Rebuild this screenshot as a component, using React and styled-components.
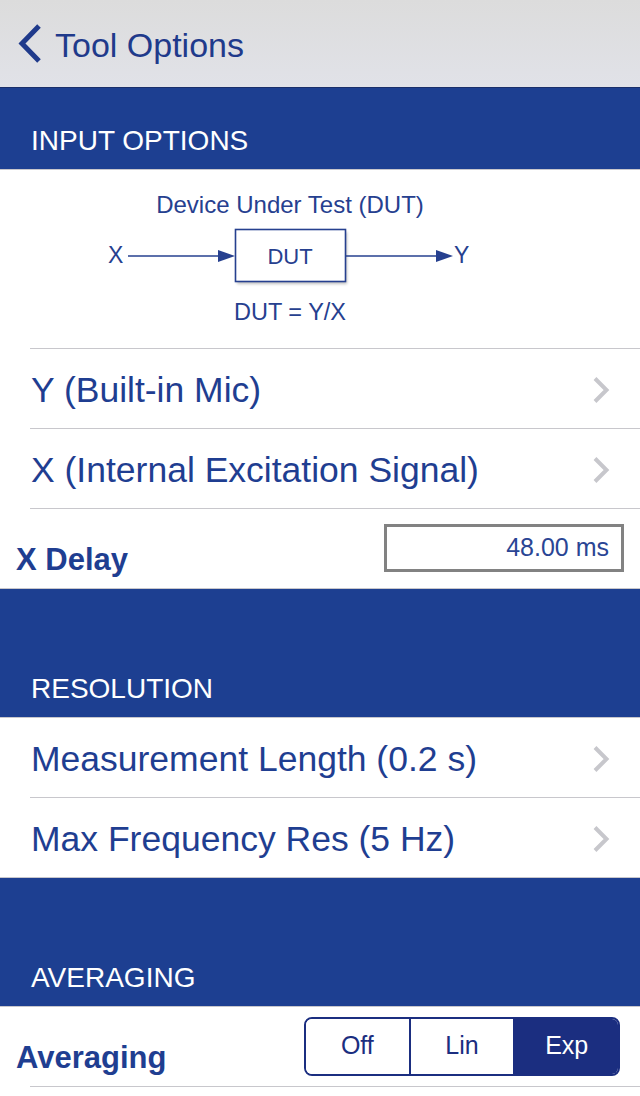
import React, { useState } from "react";
import styled, { createGlobalStyle } from "styled-components";

const GlobalStyle = createGlobalStyle`
  html, body {
    margin: 0;
    padding: 0;
    background: #ffffff;
  }
  body {
    font-family: "Liberation Sans", Arial, sans-serif;
  }
`;

const BLUE = "#1d3f91";
const TEXT_BLUE = "#1f3e91";
const DARK_BLUE = "#1b2e80";

const Page = styled.div`
  width: 640px;
  min-height: 1096px;
  background: #ffffff;
`;

const NavBar = styled.div`
  height: 87px;
  display: flex;
  align-items: center;
  padding-left: 17px;
  gap: 12px;
  background: linear-gradient(#dcdcdc, #e1e2e8);
  border-bottom: 1px solid #1a2f6b;
`;

const NavTitle = styled.span`
  font-size: 34px;
  line-height: 40px;
  color: #1f3a8b;
  padding-top: 2px;
`;

const SectionHeader = styled.div`
  height: ${(p) => (p.$tall ? 129 : 82)}px;
  display: flex;
  align-items: flex-end;
  padding: 0 0 12px 31px;
  box-sizing: border-box;
  background: ${BLUE};
  border-bottom: 1px solid #c8c7cc;
  color: #ffffff;
  font-size: 28px;
  line-height: 32px;
`;

const Cell = styled.div`
  position: relative;
  height: ${(p) => p.$height || 80}px;
  box-sizing: border-box;
  display: flex;
  align-items: center;

  &::after {
    content: "";
    position: absolute;
    left: ${(p) => (p.$full ? 0 : 30)}px;
    right: 0;
    bottom: 0;
    height: 1px;
    background: #c8c7cc;
  }
`;

const NavRow = styled(Cell)`
  justify-content: space-between;
  padding: 2px 30px 0 31px;
`;

const RowLabel = styled.span`
  font-size: 35.5px;
  line-height: 40px;
  color: ${TEXT_BLUE};
`;

const ControlRow = styled(Cell)`
  justify-content: space-between;
  padding: 0 16px 1px 16px;
`;

const BoldLabel = styled.span`
  align-self: flex-end;
  margin-bottom: 10px;
  font-size: 31px;
  line-height: 36px;
  font-weight: bold;
  color: ${TEXT_BLUE};
`;

const ValueBox = styled.div`
  width: 240px;
  height: 48px;
  box-sizing: border-box;
  margin-top: -2px;
  border: 3px solid #828282;
  display: flex;
  align-items: center;
  justify-content: flex-end;
  padding: 0 12px 0 0;
  font-size: 25px;
  color: #2a4594;
  background: #ffffff;
`;

const Segmented = styled.div`
  display: flex;
  width: 316px;
  height: 59px;
  box-sizing: border-box;
  margin-right: 4px;
  border: 2px solid ${DARK_BLUE};
  border-radius: 8px;
  overflow: hidden;
`;

const Segment = styled.button`
  flex: 1;
  border: none;
  border-left: ${(p) => (p.$first ? "none" : `2px solid ${DARK_BLUE}`)};
  background: ${(p) => (p.$active ? DARK_BLUE : "#ffffff")};
  color: ${(p) => (p.$active ? "#ffffff" : DARK_BLUE)};
  font-family: "Liberation Sans", Arial, sans-serif;
  font-size: 25px;
  padding: 0 0 3px 0;
  cursor: pointer;
`;

const Diagram = styled(Cell)`
  justify-content: flex-start;
`;

const BackIcon = () => (
  <svg width="26" height="42" viewBox="0 0 26 42">
    <polyline
      points="22,3 5,20.5 22,38"
      fill="none"
      stroke="#1f3a8b"
      strokeWidth="5"
      strokeLinecap="butt"
      strokeLinejoin="miter"
    />
  </svg>
);

const Chevron = () => (
  <svg width="18" height="28" viewBox="0 0 18 28">
    <polyline
      points="3,2.5 14.5,14 3,25.5"
      fill="none"
      stroke="#c7c7cc"
      strokeWidth="4"
    />
  </svg>
);

const DutDiagram = () => {
  const c = "#26408f";
  const font = { fontFamily: "'Liberation Sans', Arial, sans-serif", fill: c };
  return (
    <svg width="640" height="179" viewBox="0 0 640 179">
      <defs>
        <filter id="shade" x="-10%" y="-10%" width="130%" height="140%">
          <feGaussianBlur stdDeviation="1.5" />
        </filter>
      </defs>
      <text x="290" y="43" textAnchor="middle" fontSize="24" style={font}>
        Device Under Test (DUT)
      </text>
      <text x="108" y="93" fontSize="23" style={font}>X</text>
      <line x1="128" y1="86" x2="222" y2="86" stroke={c} strokeWidth="1.6" />
      <polygon points="218,80 235,86 218,92" fill={c} />
      <rect x="237" y="62" width="110" height="52" fill="#000" opacity="0.25" filter="url(#shade)" />
      <rect x="235.5" y="59.5" width="110" height="52" fill="#fff" stroke={c} strokeWidth="1.6" />
      <text x="290" y="94" textAnchor="middle" fontSize="22" style={font}>DUT</text>
      <line x1="346" y1="86" x2="440" y2="86" stroke={c} strokeWidth="1.6" />
      <polygon points="436,80 453,86 436,92" fill={c} />
      <text x="454" y="93" fontSize="23" style={font}>Y</text>
      <text x="290" y="150" textAnchor="middle" fontSize="23.5" style={font}>
        DUT = Y/X
      </text>
    </svg>
  );
};

const averagingModes = ["Off", "Lin", "Exp"];

const App = () => {
  const [mode, setMode] = useState("Exp");

  return (
    <Page>
      <GlobalStyle />
      <NavBar>
        <BackIcon />
        <NavTitle>Tool Options</NavTitle>
      </NavBar>

      <SectionHeader>INPUT OPTIONS</SectionHeader>
      <Diagram $height={179}>
        <DutDiagram />
      </Diagram>
      <NavRow>
        <RowLabel>Y (Built-in Mic)</RowLabel>
        <Chevron />
      </NavRow>
      <NavRow>
        <RowLabel>X (Internal Excitation Signal)</RowLabel>
        <Chevron />
      </NavRow>
      <ControlRow $full>
        <BoldLabel>X Delay</BoldLabel>
        <ValueBox>48.00 ms</ValueBox>
      </ControlRow>

      <SectionHeader $tall>RESOLUTION</SectionHeader>
      <NavRow>
        <RowLabel>Measurement Length (0.2 s)</RowLabel>
        <Chevron />
      </NavRow>
      <NavRow $full>
        <RowLabel>Max Frequency Res (5 Hz)</RowLabel>
        <Chevron />
      </NavRow>

      <SectionHeader $tall>AVERAGING</SectionHeader>
      <ControlRow>
        <BoldLabel>Averaging</BoldLabel>
        <Segmented>
          {averagingModes.map((m, i) => (
            <Segment
              key={m}
              $first={i === 0}
              $active={mode === m}
              onClick={() => setMode(m)}
            >
              {m}
            </Segment>
          ))}
        </Segmented>
      </ControlRow>
    </Page>
  );
};

export default App;
